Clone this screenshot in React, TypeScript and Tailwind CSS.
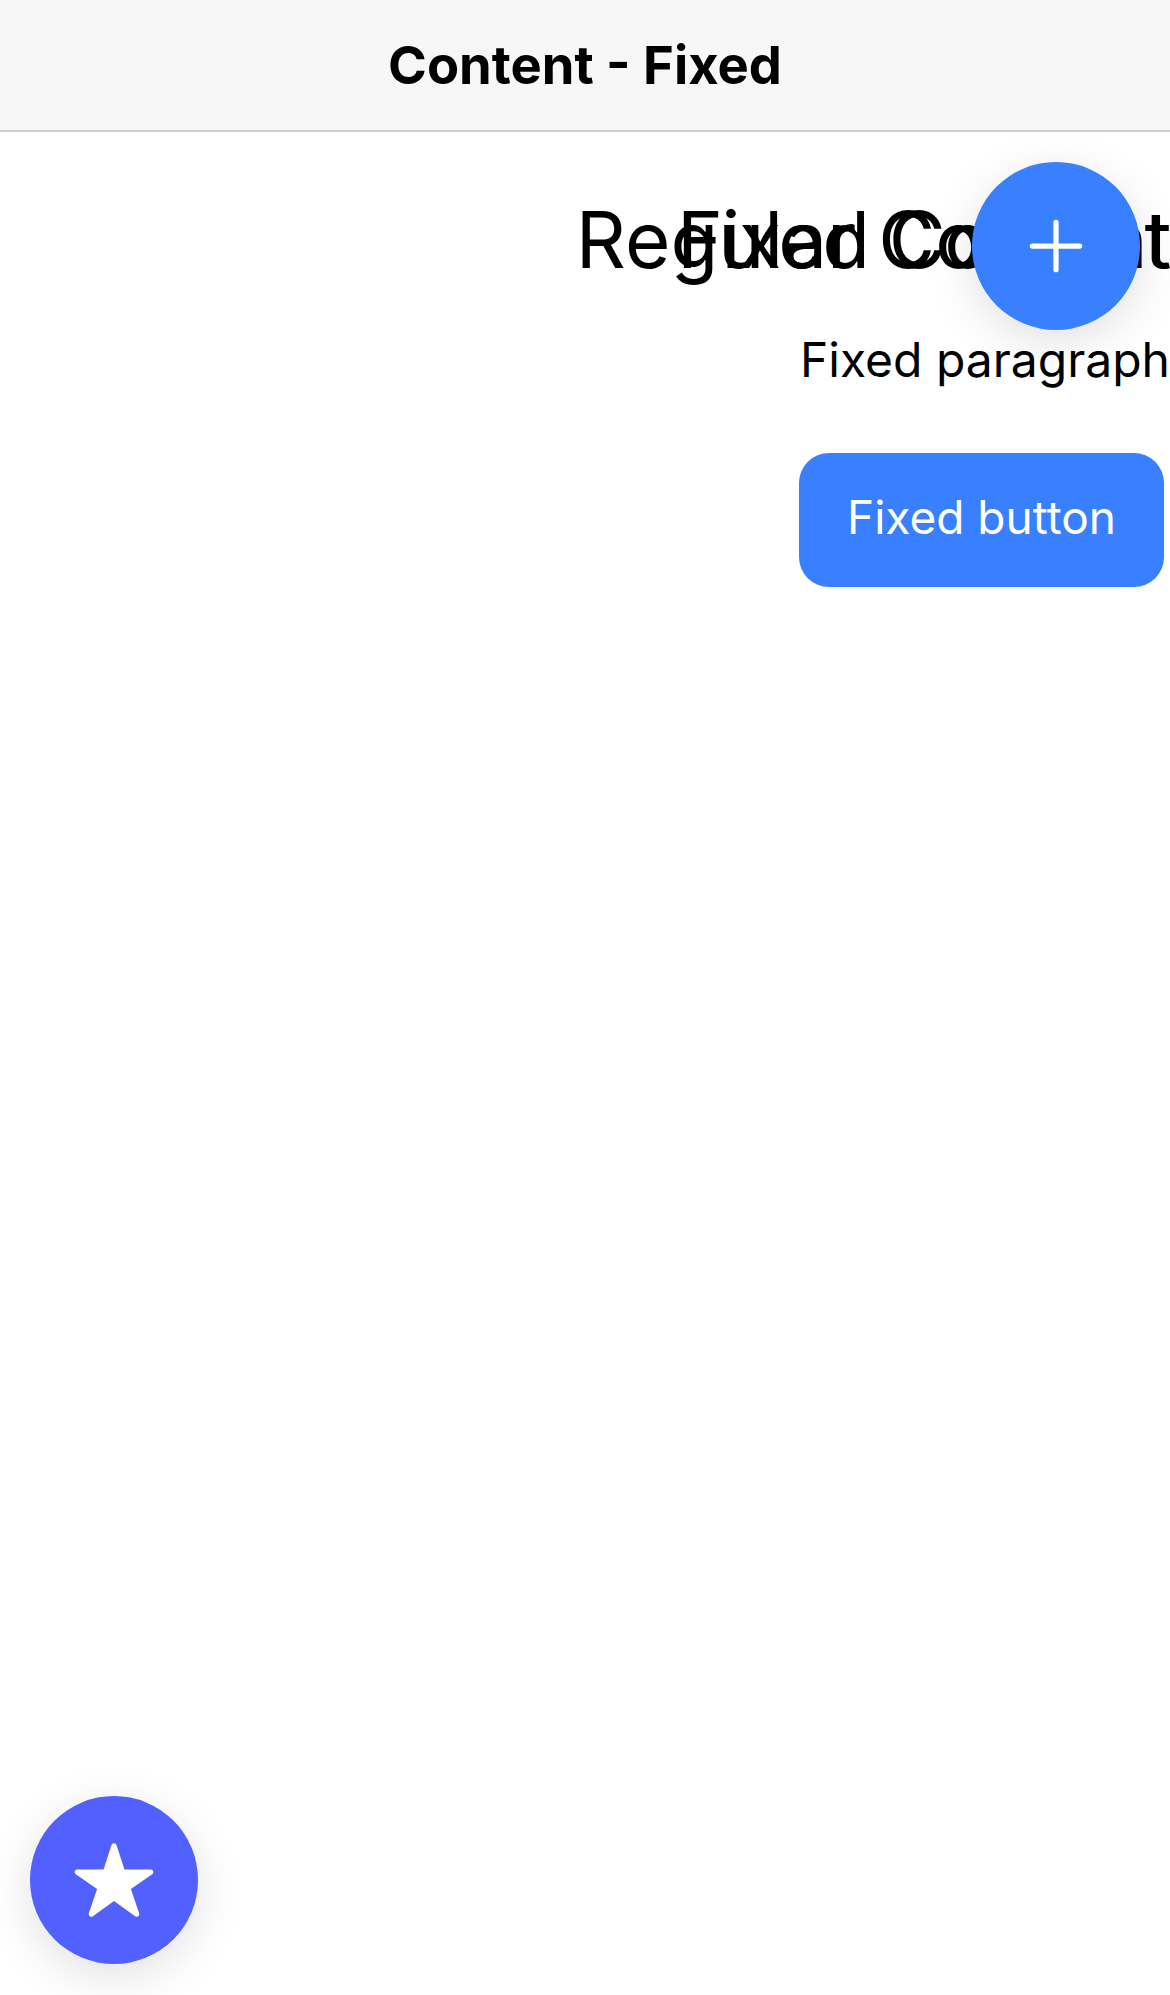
import React from 'react';

function AddIcon({ className }: { className?: string }) {
  return (
    <svg viewBox="0 0 512 512" className={className}>
      <path
        fill="none"
        stroke="currentColor"
        strokeLinecap="round"
        strokeLinejoin="round"
        strokeWidth="32"
        d="M256 112v288M400 256H112"
      />
    </svg>
  );
}

function StarIcon({ className }: { className?: string }) {
  return (
    <svg viewBox="0 0 512 512" className={className}>
      <path
        fill="currentColor"
        d="M394 480a16 16 0 01-9.39-3L256 383.76 127.39 477a16 16 0 01-24.55-18.08L153 310.35 23 221.2a16 16 0 019-29.2h160.38l48.4-148.95a16 16 0 0130.44 0l48.4 149H480a16 16 0 019.05 29.2L359 310.35l50.13 148.53A16 16 0 01394 480z"
      />
    </svg>
  );
}

export default function App() {
  return (
    <div className="h-screen w-full flex flex-col bg-white text-black font-['Inter','Noto_Sans',sans-serif] overflow-hidden">
      {/* toolbar */}
      <header className="h-[132px] shrink-0 flex items-center justify-center bg-[#f7f7f7] border-b-2 border-[#cfcfcf]">
        <h2 className="text-[52.5px] font-bold leading-[normal]">Content - Fixed</h2>
      </header>

      {/* content */}
      <main className="relative flex-1 overflow-hidden text-right">
        <div>
          <h1 className="mt-[60px] text-[78px] font-normal leading-[normal] whitespace-nowrap">Regular Content</h1>
        </div>

        {/* fixed slot */}
        <div className="absolute inset-0 pointer-events-none">
          <h1 className="mt-[60px] text-[78px] font-normal leading-[normal] tracking-[-1.5px] whitespace-nowrap">Fixed Content</h1>
          <p className="mt-[43px] text-[48px] leading-[normal] whitespace-nowrap">Fixed paragraph</p>
          <div className="mt-[64px] flex justify-end">
            <button className="pointer-events-auto mr-[6px] h-[134px] px-[48px] pb-[6px] rounded-[30px] bg-[#3880ff] text-white text-[46px] leading-none">
              Fixed button
            </button>
          </div>
        </div>

        <button className="absolute top-[30px] right-[30px] w-[168px] h-[168px] rounded-full bg-[#3880ff] text-white flex items-center justify-center shadow-[0_12px_48px_rgba(0,0,0,0.12)]">
          <AddIcon className="w-[84px] h-[84px]" />
        </button>

        <button className="absolute bottom-[31px] left-[30px] w-[168px] h-[168px] rounded-full bg-[#5260ff] text-white flex items-center justify-center shadow-[0_12px_48px_rgba(0,0,0,0.12)]">
          <StarIcon className="w-[84px] h-[84px]" />
        </button>
      </main>
    </div>
  );
}
